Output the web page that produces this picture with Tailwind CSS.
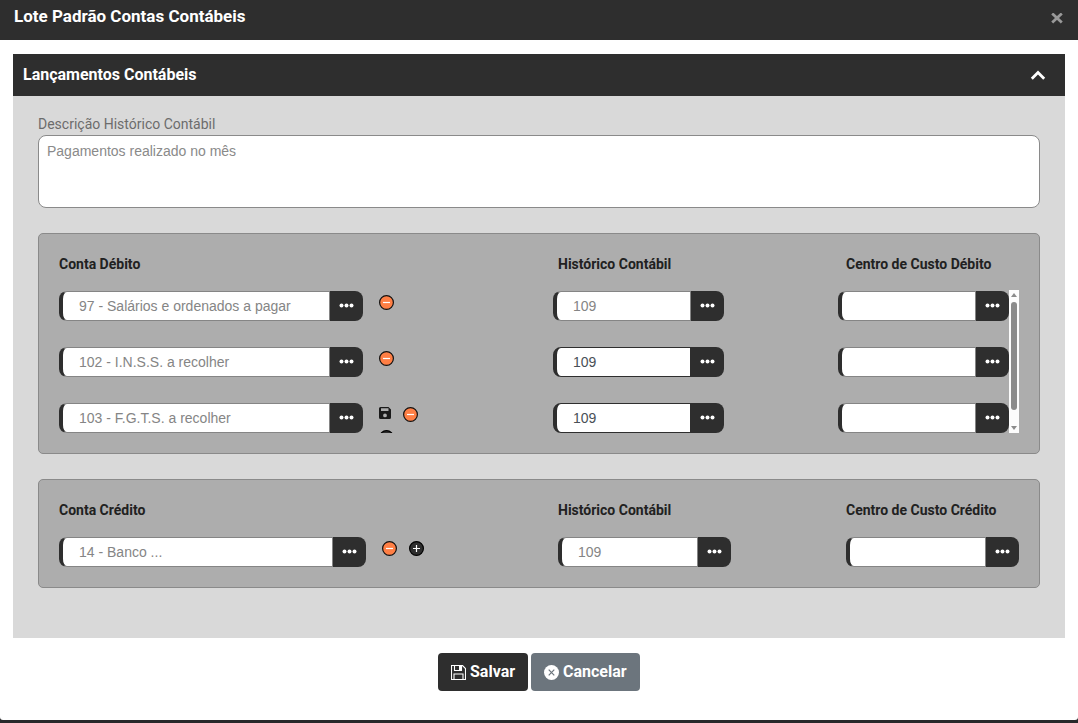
<!DOCTYPE html>
<html lang="pt-BR">
<head>
    <meta charset="UTF-8">
    <meta name="viewport" content="width=device-width, initial-scale=1.0">
    <title>Lote Padrão Contas Contábeis</title>
    <script src="https://cdn.jsdelivr.net/npm/@tailwindcss/browser@4"></script>
</head>
<body class="bg-[#28282a] font-['Roboto',sans-serif] overflow-hidden">
    <!-- Ícones -->
    <svg class="hidden">
        <symbol id="dots" viewBox="0 0 15 5"><circle cx="2.5" cy="2.5" r="2"/><circle cx="7.5" cy="2.5" r="2"/><circle cx="12.5" cy="2.5" r="2"/></symbol>
        <symbol id="minus" viewBox="0 0 15 15"><circle cx="7.5" cy="7.5" r="6.9" fill="#ff7f45" stroke="#111" stroke-width="1.2"/><path d="M4 7.5h7" stroke="#fff" stroke-width="1.2"/></symbol>
        <symbol id="plus" viewBox="0 0 15 15"><circle cx="7.5" cy="7.5" r="6.9" fill="#2e2e2e" stroke="#000" stroke-width="1.2"/><path d="M4 7.5h7M7.5 4v7" stroke="#fff" stroke-width="1.2"/></symbol>
        <symbol id="save" viewBox="0 0 12 12"><path fill-rule="evenodd" d="M1.5 0h8L12 2.5v8a1.5 1.5 0 0 1-1.5 1.5h-9A1.5 1.5 0 0 1 0 10.5v-9A1.5 1.5 0 0 1 1.5 0zM2 1.2v2.8h7.5V1.2zM6 6.5a1.9 1.9 0 1 0 0 3.8a1.9 1.9 0 0 0 0-3.8z"/></symbol>
    </svg>
    <div class="h-[720px] bg-white rounded-b-[3px]">
        <!-- Cabeçalho -->
        <header class="h-10 bg-[#2e2e2e] flex items-start justify-between pl-3.5 pr-[15px]">
            <h1 class="text-white text-[17px] leading-6 font-bold mt-1">Lote Padrão Contas Contábeis</h1>
            <button type="button" class="mt-[13px] text-[#999]"><svg class="w-3 h-[11px]" viewBox="0 0 12 11" fill="none" stroke="currentColor" stroke-width="2.8"><path d="M1.2 .5l9.6 9M10.8 .5l-9.6 9"/></svg></button>
        </header>
        <main class="mx-[13px] mt-3.5 h-[584px] bg-[#d9d9d9]">
            <div class="h-[42px] bg-[#2e2e2e] flex items-center justify-between pl-2.5 pr-[19px]">
                <h2 class="text-white text-base leading-6 font-bold">Lançamentos Contábeis</h2>
                <svg class="w-4 h-3" viewBox="0 0 16 12" fill="none" stroke="#fff" stroke-width="2.8"><path d="M1.8 9.8L8 3.6l6.2 6.2"/></svg>
            </div>
            <div class="px-[25px] pt-[18px]">
                <label for="descricao" class="block text-sm leading-[21px] text-[#6c6c6c]">Descrição Histórico Contábil</label>
                <textarea id="descricao" class="block w-full h-[73px] resize-none bg-white border border-[#8a8a8a] rounded-lg px-2 py-[5px] text-sm leading-[21px] text-[#8a8a8a] font-['Liberation_Sans',sans-serif]">Pagamentos realizado no mês</textarea>
                <!-- Débito -->
                <section class="mt-[25px] h-[221px] bg-[#adadad] border border-[#8a8a8a] rounded-[5px] px-5 pt-5">
                    <div class="flex text-sm leading-[21px] font-bold text-[#212121]">
                        <h3 class="w-[499px]">Conta Débito</h3>
                        <h3 class="w-[288px]">Histórico Contábil</h3>
                        <h3>Centro de Custo Débito</h3>
                    </div>
                    <div class="mt-[15px] h-[143px] flex overflow-hidden">
                        <div id="debitos" class="w-[950px] pt-px flex flex-col gap-[26px]"></div>
                        <!-- Barra de rolagem -->
                        <div class="w-2.5 h-[143px] bg-[#fcfcfc] flex flex-col items-center pt-[3px] pb-[3px]">
                            <svg class="w-1.5 h-1 shrink-0" viewBox="0 0 6 4" fill="#8b8b8b"><path d="M0 4L3 0l3 4z"/></svg>
                            <div class="mt-[5px] w-1.5 h-[108px] bg-[#8b8b8b] rounded-full"></div>
                            <svg class="mt-auto w-1.5 h-1 shrink-0" viewBox="0 0 6 4" fill="#8b8b8b"><path d="M0 0h6L3 4z"/></svg>
                        </div>
                    </div>
                </section>
                <!-- Crédito -->
                <section class="mt-[25px] h-[109px] bg-[#adadad] border border-[#8a8a8a] rounded-[5px] px-5 pt-5">
                    <div class="flex text-sm leading-[21px] font-bold text-[#212121]">
                        <h3 class="w-[499px]">Conta Crédito</h3>
                        <h3 class="w-[288px]">Histórico Contábil</h3>
                        <h3>Centro de Custo Crédito</h3>
                    </div>
                    <div id="creditos" class="mt-4"></div>
                </section>
            </div>
        </main>
        <!-- Botões -->
        <footer class="mt-[15px] flex justify-center gap-[3px] text-white text-base leading-6 font-bold">
            <button type="button" class="w-[90px] h-[38px] bg-[#2e2e2e] rounded-[4px] flex items-center pl-[13px]">
                <svg class="w-[15px] h-[15px] mr-1" viewBox="0 0 15 15" fill="none" stroke="#fff"><path d="M.5.5h11L14.5 3.5v11H.5zM3.5.5v5h7v-5M3 14.5v-5.5h9v5.5" stroke-width="1.1"/><path d="M8 1h2.5v4H8z" fill="#fff" stroke="none"/></svg>Salvar
            </button>
            <button type="button" class="w-[109px] h-[38px] bg-[#6c757d] rounded-[4px] flex items-center pl-[13px]">
                <svg class="w-[15px] h-[15px] mr-1" viewBox="0 0 15 15"><circle cx="7.5" cy="7.5" r="7.5" fill="#fff"/><path d="M4.7 4.7l5.6 5.6M10.3 4.7l-5.6 5.6" stroke="#6c757d" stroke-width="1.2"/></svg>Cancelar
            </button>
        </footer>
    </div>
    <script>
        const icone = (id, classe) => `<svg class="${classe}"><use href="#${id}"/></svg>`;

        // Campo de busca com o botão de reticências
        function campo(valor, largura, ativo) {
            const cores = ativo ? 'border-[#2e2e2e] text-[#495057]' : 'border-[#858585] text-[#858585]';
            return `<div class="flex h-[30px] shrink-0" style="width:${largura}px">
                <input type="text" value="${valor}" class="flex-1 min-w-0 bg-white border ${cores} border-l-4 border-l-[#2e2e2e] rounded-l-lg pl-4 text-sm font-['Liberation_Sans',sans-serif]">
                <button type="button" class="w-[33px] bg-[#2e2e2e] rounded-r-lg flex items-center justify-center fill-white">${icone('dots', 'w-[15px] h-[5px] mb-px')}</button>
            </div>`;
        }

        const circulo = 'w-[15px] h-[15px] shrink-0';
        const debitos = [
            { conta: '97 - Salários e ordenados a pagar', ativo: false, acoes: icone('minus', circulo) },
            { conta: '102 - I.N.S.S. a recolher', ativo: true, acoes: icone('minus', circulo) },
            { conta: '103 - F.G.T.S. a recolher', ativo: true, acoes: icone('save', 'w-3 h-3 fill-[#1a1a1a]') + icone('minus', circulo + ' ml-3') + icone('plus', circulo + ' mt-2') },
        ];

        document.getElementById('debitos').innerHTML = debitos.map(d => `
            <div class="flex h-[30px] shrink-0">
                ${campo(d.conta, 304, false)}
                <div class="w-[190px] h-[15px] pl-4 pr-[130px] pt-1 flex flex-wrap items-start">${d.acoes}</div>
                ${campo('109', 171, d.ativo)}
                <div class="w-[114px]"></div>
                ${campo('', 171, false)}
            </div>`).join('');

        document.getElementById('creditos').innerHTML = `
            <div class="flex h-[30px]">
                ${campo('14 - Banco ...', 307, false)}
                <div class="w-48 pl-4 pt-1 flex gap-3">${icone('minus', circulo)}${icone('plus', circulo)}</div>
                ${campo('109', 173, false)}
                <div class="w-[115px]"></div>
                ${campo('', 173, false)}
            </div>`;
    </script>
</body>
</html>
